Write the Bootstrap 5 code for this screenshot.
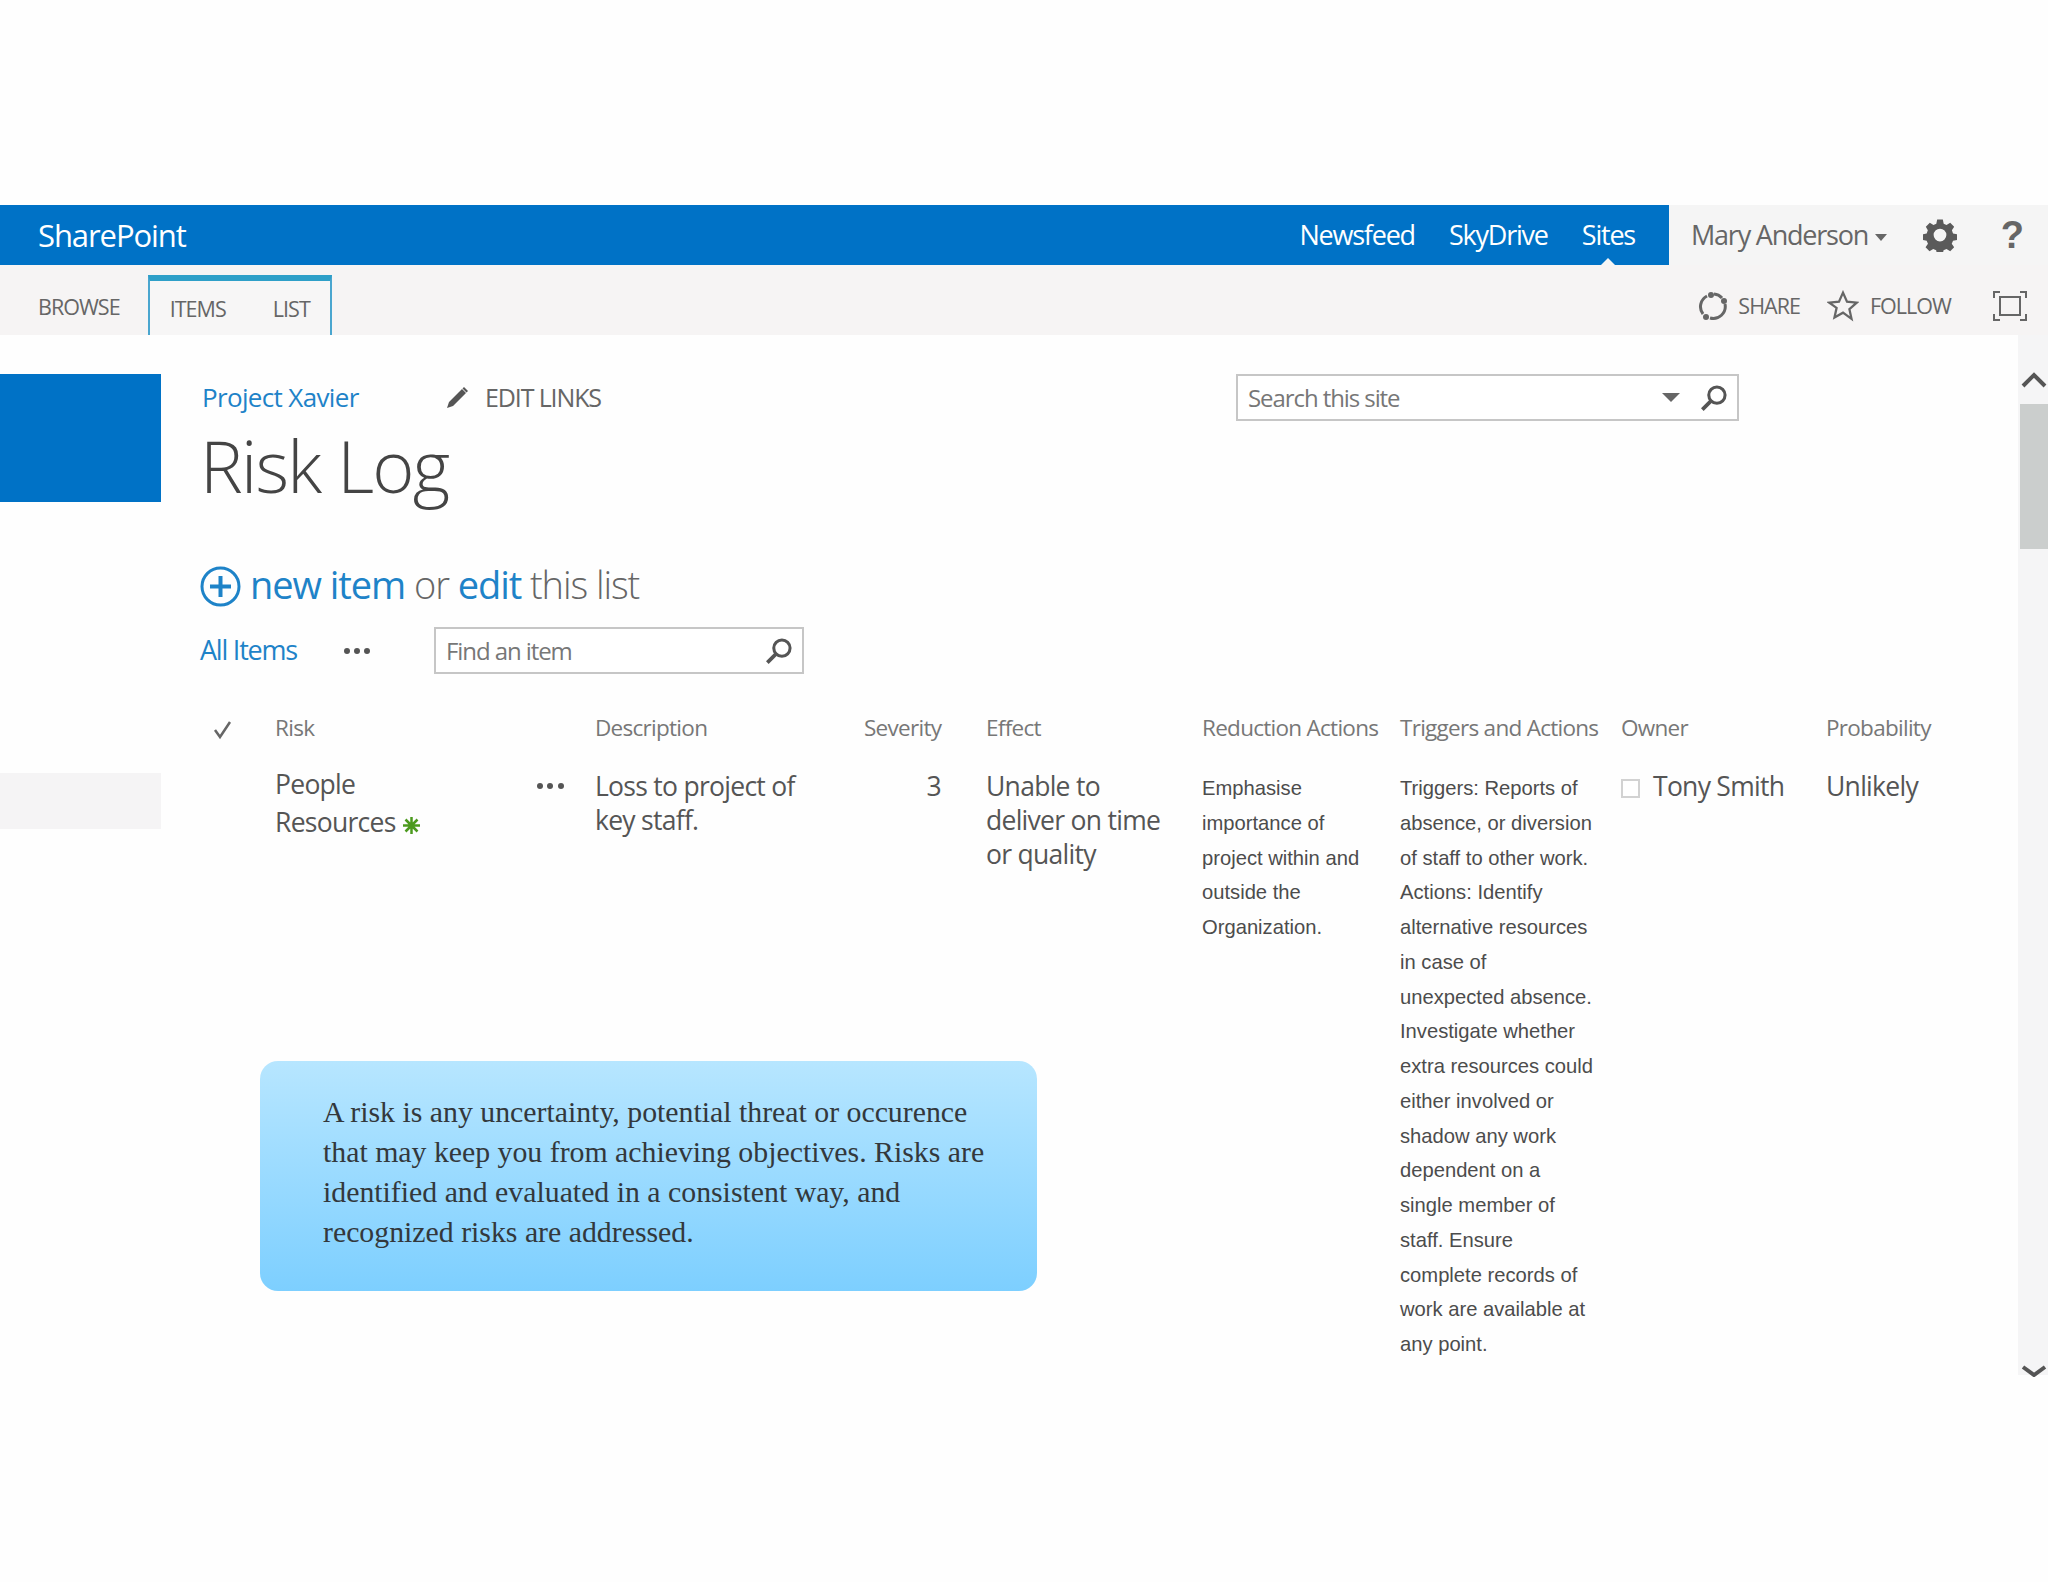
<!DOCTYPE html>
<html lang="en"><head><meta charset="utf-8"><title>Risk Log</title>
<link href="https://cdn.jsdelivr.net/npm/bootstrap@5.3.0/dist/css/bootstrap.min.css" rel="stylesheet">
<style>
html,body{height:100%}
body{background:#fefefe;font-family:"Open Sans","Noto Sans",sans-serif;color:#444;overflow:hidden;min-height:1582px}
.sq{letter-spacing:-.045em}
.top-gap{height:205px}
.suite{height:60px;background:#f5f5f5}
.suite-blue{width:1669px;background:#0072c6;color:#fff;font-size:27px;padding:0 34px 0 38px}
.brand{font-size:31px;letter-spacing:-.035em}
.suite-links{gap:34px}
.suite-active{position:relative}
.suite-active::after{content:"";position:absolute;left:50%;bottom:-10px;margin-left:-7px;border:7px solid transparent;border-bottom-color:#f5f5f5;border-top:0}
.suite-user{flex:1;padding:0 24px 0 22px;font-size:27px;color:#666}
.help-q{font-size:38px;font-weight:700;color:#666;font-family:"Liberation Sans",sans-serif}
.caret-d{display:inline-block;border:6px solid transparent;border-top:7px solid #666;border-bottom:0;margin-left:7px;vertical-align:middle}
.ribbon{height:70px;background:#f6f4f4;font-size:21.5px;color:#666;text-transform:uppercase}
.rib-left{padding-left:38px;height:100%;padding-top:14px}
.rib-tab{margin-left:28px;height:60px;align-self:flex-end;width:184px;border:2px solid #4aa6cf;border-top:6px solid #2e9fc8;border-bottom:0;padding:0 20px;gap:47px;background:#f7f6f6;padding-top:2px}
.rib-right{padding-right:21px;padding-top:12px;height:100%;color:#666}
.main{height:1040px}
.rail{width:161px;padding-top:39px;flex:none}
.rail-blue{height:128px;background:#0072c6}
.rail-row{height:56px;margin-top:271px;background:#f5f4f5}
.body-col{flex:1;position:relative;padding:39px 0 0 39px;min-width:0}
.site-line{height:47px}
.site-link{font-size:26px;color:#1e83c8;margin-left:2px;width:243px;letter-spacing:-.025em}
.edit{font-size:25px;color:#666;width:791px}
.search-box{border:2px solid #c6c6c6;background:#fff;height:47px;font-size:24px;color:#777;padding:0 9px 0 10px}
.title-h{font-size:72px;font-weight:300;line-height:1;color:#444;margin:8px 0 0 0;letter-spacing:-.025em}
.new-line{font-size:38px;font-weight:300;color:#666;margin-top:58px;height:50px;gap:9px;letter-spacing:-.028em}
.plus-ic{margin-top:5px}
.blue-t{color:#1e83c8;font-weight:400}
.view-line{margin-top:18px;height:47px}
.view-link{color:#1e83c8;font-size:27px;width:143px}
.dots{color:#555;width:91px}
.find{width:370px}
.log-table{margin:39px 0 0;width:100%;table-layout:fixed;--bs-table-bg:transparent;color:#555}
.log-table th,.log-table td{border:0;padding:0;vertical-align:top;box-shadow:none}
.log-table th{font-weight:400;font-size:22.5px;color:#777;height:56px;line-height:30px;white-space:nowrap}
.log-table td{font-size:26.5px;line-height:34px;color:#555}
.log-table td.cell-note{font-family:"Liberation Sans",Arial,sans-serif;font-size:20.2px;line-height:34.75px;color:#4c4c4c;white-space:nowrap;padding-top:2px;letter-spacing:0}
.risk-name{line-height:38px;margin-top:-4px}
.asterisk{vertical-align:-3px}
.own-check{display:inline-block;width:19px;height:19px;border:2px solid #d2d2d2;background:#fff;margin-right:13px;vertical-align:-2px}
.callout{position:absolute;left:99px;top:726px;width:777px;height:230px;border-radius:18px;background:linear-gradient(#b7e6ff,#7dcfff);padding:31px 40px 0 63px;font-family:"Liberation Serif",serif;font-size:29.8px;line-height:40px;color:#33383c}
.scroll-rail{width:30px;flex:none;background:#f5f5f6;position:relative;padding-top:69px}
.thumb{height:145px;background:#cbcecd;margin-left:2px}
.arrow{position:absolute;left:3px}
</style></head>
<body>
<div class="top-gap"></div>
<header class="suite d-flex">
  <div class="suite-blue d-flex align-items-center justify-content-between">
    <span class="brand">SharePoint</span>
    <nav class="suite-links d-flex sq"><span>Newsfeed</span><span>SkyDrive</span><span class="suite-active">Sites</span></nav>
  </div>
  <div class="suite-user d-flex align-items-center">
    <span class="sq">Mary Anderson<i class="caret-d"></i></span>
    <svg class="ms-auto" width="34" height="34" viewBox="0 0 24 24" style="margin-right:44px"><path fill="#5a5a5a" fill-rule="evenodd" d="M10 1h4l.6 3 2 .9 2.6-1.600 2.800 2.800-1.600 2.600.8 2.200 3 .6v4l-3 .6-.9 2 1.700 2.600-2.800 2.800-2.600-1.600-2.100.9-.6 3h-4l-.6-3-2.100-.9-2.600 1.600-2.800-2.800 1.700-2.600-.9-2-3-.6v-4l3-.6.8-2.200L2 6.100l2.800-2.800 2.600 1.600 2-.9zM12 7.500a4.500 4.500 0 1 0 0 9 4.500 4.500 0 0 0 0-9z"/></svg>
    <span class="help-q">?</span>
  </div>
</header>
<div class="ribbon d-flex justify-content-between">
  <div class="rib-left d-flex align-items-center sq"><span>Browse</span>
    <div class="rib-tab d-flex align-items-center"><span>Items</span><span>List</span></div></div>
  <div class="rib-right d-flex align-items-center sq">
    <svg width="30" height="32" viewBox="0 0 30 32" fill="none" stroke="#666" stroke-width="3"><path d="M9 6A12 12 0 0 0 5 24M12 28A12 12 0 0 0 27 14M16 4a12 12 0 0 1 8 4"/><circle cx="13" cy="5" r="3" fill="#666" stroke="none"/><circle cx="8" cy="27" r="3" fill="#666" stroke="none"/><circle cx="26" cy="11" r="3" fill="#666" stroke="none"/></svg>
    <span style="margin-left:10px">Share</span>
    <svg style="margin-left:27px" width="32" height="32" viewBox="0 0 24 24" fill="none" stroke="#666" stroke-width="1.700"><path d="M12 2l3 6.800 7.300.7-5.500 4.900 1.600 7.200L12 17l-6.400 3.600 1.600-7.200L1.700 9.500 9 8.800z"/></svg>
    <span style="margin-left:11px">Follow</span>
    <svg style="margin-left:42px" width="34" height="32" viewBox="0 0 34 32" fill="none" stroke="#666" stroke-width="2"><path d="M1 8V2h6M27 2h6v6M33 24v6h-6M7 30H1v-6"/><rect x="7" y="7" width="20" height="18"/></svg>
  </div>
</div>
<div class="main d-flex">
  <aside class="rail"><div class="rail-blue"></div><div class="rail-row"></div></aside>
  <main class="body-col">
    <div class="site-line d-flex align-items-center">
      <a class="site-link text-decoration-none">Project Xavier</a>
      <div class="edit sq d-flex align-items-center gap-3">
        <svg width="24" height="24" viewBox="0 0 24 24"><path fill="#555" d="M17 3l4 4L8 20l-6 2 2-6zM19 1l4 4-1.500 1.500-4-4z"/></svg>EDIT LINKS</div>
      <div class="search-box d-flex align-items-center flex-grow-0 sq" style="width:503px">
        <span class="flex-grow-1">Search this site</span>
        <i class="caret-d" style="border-width:9px 9px 0;margin-right:20px"></i>
        <svg width="28" height="28" viewBox="0 0 24 24" fill="none" stroke="#555" stroke-width="2.600"><circle cx="14.500" cy="9.500" r="7"/><path d="M9.500 14.500L2 22" stroke-width="3.200"/></svg>
      </div>
    </div>
    <h1 class="title-h">Risk Log</h1>
    <div class="new-line d-flex align-items-center">
      <svg class="plus-ic" width="41" height="41" viewBox="0 0 41 41" fill="none" stroke="#1e83c8"><circle cx="20.500" cy="20.500" r="18.500" stroke-width="3"/><path d="M20.500 10v21M10 20.500h21" stroke-width="4"/></svg>
      <span><span class="blue-t">new item</span> or <span class="blue-t">edit</span> this list</span>
    </div>
    <div class="view-line d-flex align-items-center">
      <a class="view-link sq text-decoration-none">All Items</a>
      <svg class="dots" height="8" viewBox="0 0 91 8" fill="#555"><circle cx="4" cy="4" r="3"/><circle cx="14" cy="4" r="3"/><circle cx="24" cy="4" r="3"/></svg>
      <div class="search-box find d-flex align-items-center justify-content-between sq"><span>Find an item</span>
        <svg width="28" height="28" viewBox="0 0 24 24" fill="none" stroke="#555" stroke-width="2.600"><circle cx="14.500" cy="9.500" r="7"/><path d="M9.500 14.500L2 22" stroke-width="3.200"/></svg></div>
    </div>
    <table class="table log-table">
      <colgroup><col style="width:75px"><col style="width:320px"><col style="width:269px"><col style="width:122px"><col style="width:216px"><col style="width:198px"><col style="width:221px"><col style="width:205px"><col></colgroup>
      <thead><tr class="sq">
        <th><svg style="margin-left:13px" width="20" height="20" viewBox="0 0 20 20" fill="none" stroke="#666" stroke-width="2.500"><path d="M2 10l5 7L17 2"/></svg></th>
        <th>Risk</th><th>Description</th><th>Severity</th><th>Effect</th><th>Reduction Actions</th><th>Triggers and Actions</th><th>Owner</th><th>Probability</th></tr></thead>
      <tbody><tr class="sq">
        <td></td>
        <td><div class="d-flex justify-content-between"><div class="risk-name">People<br>Resources <svg class="asterisk" width="19" height="19" viewBox="0 0 19 19" stroke="#4c9a1f" stroke-width="2.500"><path d="M9.500 1v17M1 9.500h17M3.500 3.500l12 12M15.500 3.500l-12 12"/></svg></div>
          <svg style="margin:13px 30px 0 0" width="29" height="8" viewBox="0 0 29 8" fill="#555"><circle cx="4" cy="4" r="3"/><circle cx="14" cy="4" r="3"/><circle cx="25" cy="4" r="3"/></svg></div></td>
        <td>Loss to project of<br>key staff.</td>
        <td class="text-end" style="padding-right:45px">3</td>
        <td>Unable to<br>deliver on time<br>or quality</td>
        <td class="cell-note">Emphasise<br>importance of<br>project within and<br>outside the<br>Organization.</td>
        <td class="cell-note">Triggers: Reports of<br>absence, or diversion<br>of staff to other work.<br>Actions: Identify<br>alternative resources<br>in case of<br>unexpected absence.<br>Investigate whether<br>extra resources could<br>either involved or<br>shadow any work<br>dependent on a<br>single member of<br>staff. Ensure<br>complete records of<br>work are available at<br>any point.</td>
        <td><i class="own-check"></i>Tony Smith</td>
        <td>Unlikely</td>
      </tr></tbody>
    </table>
    <aside class="callout">A risk is any uncertainty, potential threat or occurence<br>that may keep you from achieving objectives. Risks are<br>identified and evaluated in a consistent way, and<br>recognized risks are addressed.</aside>
  </main>
  <div class="scroll-rail">
    <svg class="arrow" style="top:36px" width="26" height="18" viewBox="0 0 26 18" fill="none" stroke="#555" stroke-width="4"><path d="M2 15L13 4l11 11"/></svg>
    <div class="thumb"></div>
    <svg class="arrow" style="top:1030px" width="26" height="12" viewBox="0 0 26 12" fill="none" stroke="#555" stroke-width="4"><path d="M2 2l11 8 11-8"/></svg>
  </div>
</div>
<script src="https://cdn.jsdelivr.net/npm/bootstrap@5.3.0/dist/js/bootstrap.bundle.min.js"></script>
</body></html>
